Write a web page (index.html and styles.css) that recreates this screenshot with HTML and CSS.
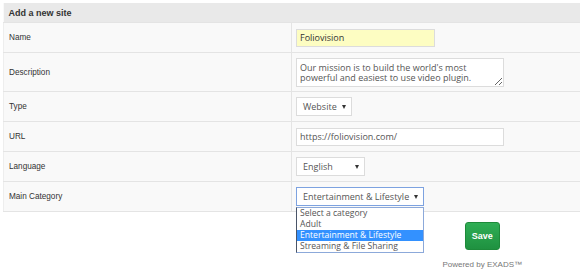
FILE: index.html
```html
<!DOCTYPE html>
<html>
<head>
<meta charset="utf-8">
<link rel="stylesheet" href="styles.css">
</head>
<body>
<table class="form-table">
  <tr class="head-row"><th colspan="2">Add a new site</th></tr>
  <tr class="row">
    <td class="label">Name</td>
    <td class="field"><input class="text-input name-input" type="text" value="Foliovision"></td>
  </tr>
  <tr class="row tall">
    <td class="label">Description</td>
    <td class="field"><textarea class="text-area">Our mission is to build the world's most powerful and easiest to use video plugin.</textarea></td>
  </tr>
  <tr class="row">
    <td class="label">Type</td>
    <td class="field"><div class="select type-select"><span>Website</span><span class="arrow"></span></div></td>
  </tr>
  <tr class="row">
    <td class="label">URL</td>
    <td class="field"><input class="text-input url-input" type="text" value="https://foliovision.com/"></td>
  </tr>
  <tr class="row">
    <td class="label">Language</td>
    <td class="field"><div class="select lang-select"><span>English</span><span class="arrow"></span></div></td>
  </tr>
  <tr class="row">
    <td class="label">Main Category</td>
    <td class="field">
      <div class="select-wrap">
        <div class="select cat-select focused"><span>Entertainment &amp; Lifestyle</span><span class="arrow"></span></div>
        <ul class="dropdown">
          <li>Select a category</li>
          <li>Adult</li>
          <li class="selected">Entertainment &amp; Lifestyle</li>
          <li>Streaming &amp; File Sharing</li>
        </ul>
      </div>
    </td>
  </tr>
</table>
<div class="footer">
  <div class="actions">
    <button class="save-btn">Save</button>
    <div class="powered">Powered by EXADS™</div>
  </div>
</div>
</body>
</html>
```
FILE: styles.css
```css
html, body {
  margin: 0;
  padding: 0;
  background: #ffffff;
}
body {
  padding: 3px 0 0 3px;
  font-family: "Liberation Sans", Arial, sans-serif;
  color: #333333;
}
.form-table {
  width: 577px;
  border-collapse: collapse;
  background: #f9f9f9;
}
.head-row th {
  height: 19px;
  padding: 0 0 0 5px;
  background: #e9e9e9;
  text-align: left;
  font-size: 9px;
  font-weight: bold;
  color: #333333;
}
.row td {
  height: 29px;
  border-top: 1px solid #e4e4e4;
  border-bottom: 1px solid #e4e4e4;
  padding: 0;
  vertical-align: middle;
}
.row.tall td {
  height: 38px;
}
.row .label {
  width: 282px;
  padding-left: 5px;
  border-left: 1px solid #eeeeee;
  border-right: 1px solid #e4e4e4;
  font-size: 8.2px;
  color: #333333;
}
.row .field {
  padding-left: 4px;
}
.text-input {
  box-sizing: border-box;
  display: block;
  height: 18px;
  border: 1px solid #dcdcdc;
  padding: 0 3px;
  font-family: "Open Sans", sans-serif;
  font-size: 9px;
  color: #555555;
  background: #ffffff;
  outline: none;
}
.name-input {
  width: 139px;
  background: #fdfdc2;
  color: #333333;
}
.url-input {
  width: 208px;
}
.text-area {
  box-sizing: border-box;
  display: block;
  width: 208px;
  height: 29px;
  border: 1px solid #dcdcdc;
  padding: 4px 3px 0 3px;
  font-family: "Open Sans", sans-serif;
  font-size: 9px;
  line-height: 10px;
  color: #555555;
  background: #ffffff;
  resize: both;
  overflow: hidden;
  outline: none;
}
.select {
  box-sizing: border-box;
  display: flex;
  align-items: center;
  justify-content: space-between;
  height: 19px;
  padding: 0 5px 0 6px;
  border: 1px solid #dcdcdc;
  background: #ffffff;
  font-family: "Open Sans", sans-serif;
  font-size: 9px;
  color: #555555;
}
.arrow {
  width: 0;
  height: 0;
  border-left: 2.5px solid transparent;
  border-right: 2.5px solid transparent;
  border-top: 4px solid #333333;
}
.type-select { width: 56px; }
.lang-select { width: 69px; }
.cat-select { width: 128px; padding-right: 5px; }
.cat-select.focused {
  border-color: #7da2e0;
}
.select-wrap {
  position: relative;
}
.dropdown {
  position: absolute;
  left: 0;
  top: 20px;
  z-index: 2;
  box-sizing: border-box;
  width: 128px;
  margin: 0;
  padding: 0;
  list-style: none;
  background: #ffffff;
  border: 1px solid #8ca9da;
  border-left-color: #4a5568;
  font-family: "Open Sans", sans-serif;
  font-size: 8.6px;
  color: #555555;
}
.dropdown li {
  height: 11px;
  line-height: 11px;
  padding-left: 3px;
  white-space: nowrap;
}
.dropdown li.selected {
  background: #3391ff;
  color: #ffffff;
}
.footer {
  display: flex;
  justify-content: flex-end;
  padding: 10px 58px 0 0;
}
.actions {
  display: flex;
  flex-direction: column;
  align-items: center;
  gap: 10px;
}
.save-btn {
  width: 35px;
  height: 28px;
  border: 1px solid #1d8a3a;
  border-radius: 3px;
  background: linear-gradient(#2fae55, #1f9140);
  color: #ffffff;
  font-family: "Liberation Sans", Arial, sans-serif;
  font-size: 9px;
  font-weight: bold;
  padding: 0;
}
.powered {
  font-size: 8px;
  color: #777777;
}
```
